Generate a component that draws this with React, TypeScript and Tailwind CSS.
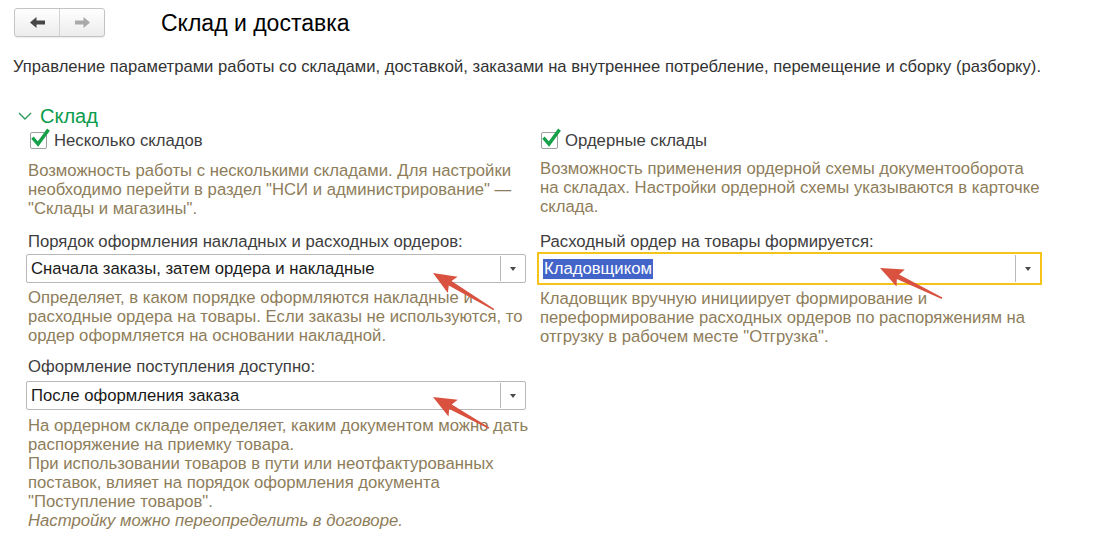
import React from "react";

const FONT = { fontFamily: '"Liberation Sans", Arial, sans-serif' };

function NavButtons() {
  return (
    <div className="flex h-[29px] w-[91px] rounded-[3px] border border-[#c4c4c4] bg-gradient-to-b from-[#ffffff] to-[#ececec] shadow-[0_1px_1px_rgba(0,0,0,0.08)]">
      <div className="flex flex-1 items-center justify-center border-r border-[#d2d2d2]">
        <svg width="15" height="11" viewBox="0 0 15 11">
          <polygon points="0,5.5 6.5,0 6.5,3.6 15,3.6 15,7.4 6.5,7.4 6.5,11" fill="#474747" />
        </svg>
      </div>
      <div className="flex flex-1 items-center justify-center">
        <svg width="15" height="11" viewBox="0 0 15 11">
          <polygon points="15,5.5 8.5,0 8.5,3.6 0,3.6 0,7.4 8.5,7.4 8.5,11" fill="#a9a9a9" />
        </svg>
      </div>
    </div>
  );
}

function Checkbox({ label }: { label: string }) {
  return (
    <div className="flex h-[19px] items-center">
      <div className="relative h-[17px] w-[17px] shrink-0 rounded-[2px] border border-[#9f9f9f] bg-white">
        <svg className="absolute -left-[1px] -top-[5px]" width="21" height="21" viewBox="0 0 21 21">
          <path d="M3.6 11 L8 16 L17.5 3" fill="none" stroke="#17a04a" strokeWidth="3.4" strokeLinecap="square" />
        </svg>
      </div>
      <span className="ml-[7px] text-[16.7px] leading-[19px] text-[#3d3d3d]">{label}</span>
    </div>
  );
}

function Select({ value, focused }: { value: string; focused?: boolean }) {
  return (
    <div
      className={
        focused
          ? "-mx-[2px] -my-[2px] flex h-[33px] items-stretch border-2 border-[#f6c31b] bg-white"
          : "flex h-[29px] items-stretch rounded-[2px] border border-[#b8b8b8] bg-white"
      }
    >
      <div className="flex flex-1 items-center pl-[4px] text-[16.7px] text-[#1a1a1a]">
        {focused ? (
          <span className="bg-[#4364c9] px-[1px] leading-[20px] text-white">{value}</span>
        ) : (
          <span className="leading-[19px]">{value}</span>
        )}
      </div>
      <div className="my-[1px] w-px bg-[#b9b9b9]" />
      <div className="flex w-[24px] items-center justify-center">
        <div className="h-0 w-0 border-l-[3.5px] border-r-[3.5px] border-t-[4px] border-l-transparent border-r-transparent border-t-[#4a4a4a]" />
      </div>
    </div>
  );
}

function Help({ children }: { children: React.ReactNode }) {
  return <div className="whitespace-nowrap text-[16.7px] leading-[19px] text-[#8e7d5a]">{children}</div>;
}

function Label({ children }: { children: React.ReactNode }) {
  return <div className="text-[16.7px] leading-[19px] text-[#3d3d3d]">{children}</div>;
}

// Red annotation arrows drawn over the form
function RedArrow({ x, y, angle, length }: { x: number; y: number; angle: number; length: number }) {
  return (
    <g transform={`translate(${x} ${y}) rotate(${angle})`}>
      <polygon
        points={`0,0 23,-9.5 20,-2.6 ${length},-0.7 ${length},0.7 20,2.6 23,9.5`}
        fill="#d9513f"
      />
    </g>
  );
}

export default function App() {
  return (
    <div className="relative h-[538px] w-[1119px] overflow-hidden bg-white" style={FONT}>
      {/* Заголовок */}
      <div className="flex items-center pl-[14px] pt-[8px]">
        <NavButtons />
        <h1 className="ml-[56px] text-[23px] leading-[26px] text-black">Склад и доставка</h1>
      </div>

      <p className="mt-[20px] whitespace-nowrap pl-[13px] text-[16.6px] leading-[19px] text-[#333]">
        Управление параметрами работы со складами, доставкой, заказами на внутреннее потребление, перемещение и сборку (разборку).
      </p>

      {/* Группа Склад */}
      <div className="mt-[28px] flex h-[24px] items-center pl-[18px]">
        <svg width="14" height="8" viewBox="0 0 14 8">
          <path d="M1 1 L7 7 L13 1" fill="none" stroke="#2e9a5c" strokeWidth="1.4" />
        </svg>
        <span className="ml-[8px] text-[20px] leading-[24px] text-[#0a9b4c]">Склад</span>
      </div>

      <div className="mt-[3px] grid grid-cols-[500px_501px] gap-x-[13px] pl-[26px]">
        {/* Левая колонка */}
        <div>
          <div className="pl-[4px]">
            <Checkbox label="Несколько складов" />
          </div>
          <div className="mt-[11px] pl-[2px]">
            <Help>
              Возможность работы с несколькими складами. Для настройки
              <br />
              необходимо перейти в раздел "НСИ и администрирование" —
              <br />
              "Склады и магазины".
            </Help>
          </div>
          <div className="mt-[14px] pl-[2px]">
            <Label>Порядок оформления накладных и расходных ордеров:</Label>
          </div>
          <div className="mt-[3px]">
            <Select value="Сначала заказы, затем ордера и накладные" />
          </div>
          <div className="mt-[5px] pl-[2px]">
            <Help>
              Определяет, в каком порядке оформляются накладные и
              <br />
              расходные ордера на товары. Если заказы не используются, то
              <br />
              ордер оформляется на основании накладной.
            </Help>
          </div>
          <div className="mt-[12px] pl-[2px]">
            <Label>Оформление поступления доступно:</Label>
          </div>
          <div className="mt-[5px]">
            <Select value="После оформления заказа" />
          </div>
          <div className="mt-[6px] pl-[2px]">
            <Help>
              На ордерном складе определяет, каким документом можно дать
              <br />
              распоряжение на приемку товара.
              <br />
              При использовании товаров в пути или неотфактурованных
              <br />
              поставок, влияет на порядок оформления документа
              <br />
              "Поступление товаров".
              <br />
              <i>Настройку можно переопределить в договоре.</i>
            </Help>
          </div>
        </div>

        {/* Правая колонка */}
        <div>
          <div className="pl-[2px]">
            <Checkbox label="Ордерные склады" />
          </div>
          <div className="mt-[9px] pl-[1px]">
            <Help>
              Возможность применения ордерной схемы документооборота
              <br />
              на складах. Настройки ордерной схемы указываются в карточке
              <br />
              склада.
            </Help>
          </div>
          <div className="mt-[16px] pl-[1px]">
            <Label>Расходный ордер на товары формируется:</Label>
          </div>
          <div className="mt-[3px]">
            <Select value="Кладовщиком" focused />
          </div>
          <div className="mt-[6px] pl-[1px]">
            <Help>
              Кладовщик вручную инициирует формирование и
              <br />
              переформирование расходных ордеров по распоряжениям на
              <br />
              отгрузку в рабочем месте "Отгрузка".
            </Help>
          </div>
        </div>
      </div>

      <svg className="pointer-events-none absolute left-0 top-0" width="1119" height="538">
        <RedArrow x={433} y={273} angle={31} length={71} />
        <RedArrow x={433} y={397} angle={29} length={64} />
        <RedArrow x={880} y={268} angle={26} length={69} />
      </svg>
    </div>
  );
}
